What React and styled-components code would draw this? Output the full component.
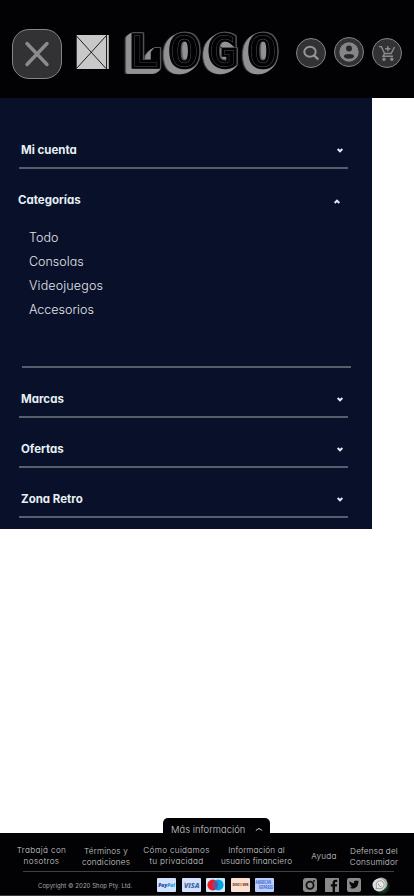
import React from "react";
import styled, { createGlobalStyle, css } from "styled-components";

const Global = createGlobalStyle`
  * { box-sizing: border-box; }
  body { margin: 0; background: #fff; font-family: Inter, "Open Sans", sans-serif; font-feature-settings: "cv11" 1; }
  button { font: inherit; font-feature-settings: inherit; padding: 0; border: 0; background: none; }
`;
const Page = styled.div`
  width: 414px; height: 896px; display: flex; flex-direction: column; overflow: hidden;
`;
const Header = styled.header`
  height: 98px; flex: none; background: #020204; display: flex; align-items: flex-start; padding-left: 12px;
`;
const CloseButton = styled.button`
  width: 50px; height: 50px; margin-top: 29px; border-radius: 17px; background: #323234;
  border: 1px solid #858587; display: flex; align-items: center; justify-content: center;
`;
const Placeholder = styled.svg`
  width: 33px; height: 34px; margin: 35px 0 0 14px; flex: none;
`;

const outline = "drop-shadow(1px 0 0 #565658) drop-shadow(0 -1px 0 #565658)";
const extrusion = Array.from({ length: 5 }, () => "drop-shadow(-1px 1px 0 #929294)").join(" ");

const Wordmark = styled.div`
  display: flex; flex: none; width: 160px; height: 50px; margin: 27px 0 0 15px; line-height: 50px;
  font-family: "DejaVu Sans Mono", monospace; font-size: 41px; color: #020204;
`;
const Letter = styled.span`
  position: relative; width: 39.6px; height: 50px; text-align: center; flex: none;
  transform: translateX(${(p) => p.$shift || 0}px) scaleX(${(p) => p.$stretch});
  -webkit-text-stroke: 5.4px #020204; paint-order: stroke fill;
  filter: ${outline} ${extrusion};
  &::after {
    content: "${(p) => p.children}"; position: absolute; inset: 0;
    -webkit-text-stroke: 0.8px #525254; color: #020204;
  }
  ${(p) => p.$heel && css`
    &::before {
      content: ""; position: absolute; left: 25px; top: 21px; width: 8.4px; height: 19px; background: #020204;
      clip-path: polygon(40% 0, 100% 0, 100% 100%, 0 100%, 0 25%);
    }
  `}
`;
const Actions = styled.div`
  display: flex; gap: 8px; margin: 37px 0 0 12px;
`;
const RoundButton = styled.button`
  width: 30px; height: 30px; border-radius: 50%; background: #323234; border: 1px solid #858587;
  margin-top: ${(p) => p.$drop}px; display: flex; align-items: center; justify-content: center; flex: none;
`;
const Menu = styled.nav`
  width: 372px; height: 431px; background: #09102a; padding: 35px 24px 0 19px; flex: none;
`;
const MenuRow = styled.div`
  height: ${(p) => (p.$first ? 36 : 50)}px; padding: ${(p) => (p.$first ? 8 : 22)}px 5px 0 2px;
  border-bottom: 2px solid #565d6c; display: flex; justify-content: space-between;
`;
const MenuTitle = styled.span`
  font-size: 11.5px; line-height: 19px; font-weight: 700; color: #e6f0f3; white-space: nowrap;
`;
const Chevron = styled.svg`
  width: 6px; height: 5px; margin-top: ${(p) => p.$top}px; fill: none; stroke: #e6edf2; stroke-width: 2;
`;
const OpenSection = styled.section`
  height: 199px; width: 329px; margin-left: 3px; border-bottom: 2px solid #565d6c; padding-top: 22px;
`;
const OpenHead = styled.div`
  display: flex; justify-content: space-between; height: 19px; margin-left: -4px; padding-right: 11px;
`;
const SubList = styled.ul`
  list-style: none; margin: 16px 0 0 7px; padding: 0; color: #e3e4e8; font-weight: 300; font-size: 12.5px; line-height: 24px;
`;
const SubItem = styled.li`
  letter-spacing: ${(p) => p.$track || 0}px;
`;
const Footer = styled.footer`
  margin-top: auto; height: 78px; flex: none; display: flex; flex-direction: column;
`;
const MoreTab = styled.button`
  width: 107px; height: 15px; margin-left: 163px; background: #020204; border-radius: 5px 5px 0 0;
  color: #d0d0d0; font-weight: 300; font-size: 9.4px; display: flex; align-items: center; gap: 9px;
  padding: 8px 0 0 8px; white-space: nowrap;
`;
const TabLabel = styled.span`
  line-height: 14px; margin-top: 1px; width: 75px; text-align: left; letter-spacing: 0.05px;
`;
const FooterBar = styled.div`
  height: 63px; background: #020204; border-bottom: 1px solid #3c3839; padding-left: 10px;
`;
const Links = styled.div`
  display: flex; height: 38px; color: #cfcfcf; font-size: 8.2px; line-height: 11px; font-weight: 300; text-align: center; padding-top: 12px;
`;
const FootLink = styled.a`
  width: ${(p) => p.$w}px; padding-top: ${(p) => p.$drop}px; white-space: nowrap; flex: none;
  letter-spacing: ${(p) => p.$track || 0}px;
`;
const Rule = styled.div`
  height: 1px; width: 371px; margin-left: 13px; background: #3e423e;
`;
const Bottom = styled.div`
  display: flex; height: 23px; padding: 6px 0 0 28px;
`;
const Copyright = styled.span`
  width: 119px; font-size: 6px; line-height: 9px; padding-top: 3px; color: #a8a8a8; white-space: nowrap;
  letter-spacing: 0.05px;
`;
const Cards = styled.div`
  display: flex; gap: 5.6px; width: 146px;
`;
const Card = styled.svg`
  width: 19px; height: 14px; flex: none; overflow: visible; font-family: "Open Sans", sans-serif; font-weight: 800;
`;
const Social = styled.div`
  display: flex; gap: 8px;
`;
const SocialIcon = styled.svg`
  width: 14px; height: 14px; flex: none; overflow: visible;
`;

const Down = () => <Chevron $top={7} viewBox="0 0 6 5"><path d="M.6 1 3 3.3 5.4 1" /></Chevron>;

const Row = ({ children, first }) => (
  <MenuRow $first={first}><MenuTitle>{children}</MenuTitle><Down /></MenuRow>
);

export default function App() {
  return (
    <Page>
      <Global />
      <Header>
        <CloseButton aria-label="Cerrar">
          <svg width="28" height="28" viewBox="0 0 28 28" stroke="#8b8b8d" strokeWidth="3.4" strokeLinecap="round"><path d="M4 3.500 24 24.500M24 3.500 4 24.500" /></svg>
        </CloseButton>
        <Placeholder viewBox="0 0 33 34">
          <rect width="30" height="34" fill="#c8c8c8" /><rect x="31" width="1.800" height="34" fill="#c8c8c8" />
          <path d="M.5 1 30 33.500M30 1 .5 33.500M30.500 0V34M.3 0V34" stroke="#202022" fill="none" />
        </Placeholder>
        <Wordmark aria-label="LOGO">
          <Letter $stretch={1.18} $shift={0.5} $heel>L</Letter>
          <Letter $stretch={1.18} $shift={0.5}>O</Letter>
          <Letter $stretch={1.1}>G</Letter>
          <Letter $stretch={1.14}>O</Letter>
        </Wordmark>
        <Actions>
          <RoundButton $drop={1} aria-label="Buscar">
            <svg width="18" height="18" viewBox="0 0 18 18" fill="none" stroke="#959597" strokeWidth="2"><ellipse cx="8" cy="7.700" rx="5.700" ry="5" /><path d="m12 11.300 4.300 4.200" strokeWidth="2.400" /></svg>
          </RoundButton>
          <RoundButton $drop={0} aria-label="Mi cuenta">
            <svg width="20" height="20" viewBox="0 0 20 20"><circle cx="10" cy="10" r="9.700" fill="#858587" /><circle cx="10" cy="6.500" r="3" fill="#29292b" /><ellipse cx="10" cy="14.300" rx="5" ry="2.400" fill="#29292b" /></svg>
          </RoundButton>
          <RoundButton $drop={1} aria-label="Carrito">
            <svg width="18" height="18" viewBox="0 0 18 18" fill="none" stroke="#8b8b8d" strokeWidth="1.400"><path d="M1 2.600h2.400l3.200 6.900h6.600L16.500 3M6.600 9.500 5 12.300h10M9.800 2v5.200M7.100 4.700h5.300" /><circle cx="6" cy="15.300" r="1" fill="#8b8b8d" /><circle cx="13.800" cy="15.300" r="1" fill="#8b8b8d" /></svg>
          </RoundButton>
        </Actions>
      </Header>
      <Menu>
        <Row first>Mi cuenta</Row>
        <OpenSection>
          <OpenHead><MenuTitle>Categorías</MenuTitle><Chevron $top={8} viewBox="0 0 6 5"><path d="M.6 4 3 1.700 5.400 4" /></Chevron></OpenHead>
          <SubList><SubItem>Todo</SubItem><SubItem>Consolas</SubItem><SubItem $track={0.15}>Videojuegos</SubItem><SubItem>Accesorios</SubItem></SubList>
        </OpenSection>
        <Row>Marcas</Row>
        <Row>Ofertas</Row>
        <Row>Zona Retro</Row>
      </Menu>
      <Footer>
        <MoreTab><TabLabel>Más información</TabLabel>
          <svg width="8" height="5" viewBox="0 0 8 5" fill="none" stroke="#ccc"><path d="M.8 3.500 4 1.400 7.200 3.500" /></svg>
        </MoreTab>
        <FooterBar>
          <Links>
            <FootLink $w={63} $drop={0} $track={0.35}>Trabajá con<br />nosotros</FootLink>
            <FootLink $w={66} $drop={1} $track={0.18}>Términos y<br />condiciones</FootLink>
            <FootLink $w={75} $drop={0} $track={0.3}>Cómo cuidamos<br />tu privacidad</FootLink>
            <FootLink $w={85} $drop={0} $track={0.12}>Información al<br />usuario financiero</FootLink>
            <FootLink $w={50} $drop={6} $track={0.3}>Ayuda</FootLink>
            <FootLink $w={50} $drop={1} $track={0.18}>Defensa del<br />Consumidor</FootLink>
          </Links>
          <Rule />
          <Bottom>
            <Copyright>Copyright © 2020 Shop Pty. Ltd.</Copyright>
            <Cards>
              <Card viewBox="0 0 19 14"><rect width="19" height="14" rx="1" fill="#d2e2ff" /><text x="1.2" y="9" fontSize="5.5" fontStyle="italic" textLength="16.8" lengthAdjust="spacingAndGlyphs"><tspan fill="#1d4d98">Pay</tspan><tspan fill="#239ee0">Pal</tspan></text></Card>
              <Card viewBox="0 0 19 14"><rect width="19" height="14" rx="1" fill="#d2e2ff" /><text x="2" y="9.8" fontSize="7.4" fontStyle="italic" fill="#4266a7" textLength="15.5" lengthAdjust="spacingAndGlyphs">VISA</text><path d="m2 4.400 2 .2.700 2.500z" fill="#dba753" /></Card>
              <Card viewBox="0 0 19 14"><rect width="19" height="14" rx="1" fill="#c9eafb" /><circle cx="6.8" cy="7" r="5.4" fill="#ee1824" /><circle cx="12.2" cy="7" r="5.4" fill="#08a2df" /><path d="M9.5 2.400a5.400 5.400 0 0 1 0 9.200 5.400 5.400 0 0 1 0-9.200" fill="#5e55a3" /></Card>
              <Card viewBox="0 0 19 14"><rect width="19" height="14" rx="1" fill="#ffe0d0" /><text x="1.5" y="8.3" fontSize="3.6" fill="#514744" textLength="16" lengthAdjust="spacingAndGlyphs">DISC<tspan fill="#f1702a">O</tspan>VER</text></Card>
              <Card viewBox="0 0 19 14"><rect width="19" height="14" rx="1" fill="#bccfff" /><text x=".6" y="6.2" fontSize="4.4" fill="#5378d5" textLength="15.500" lengthAdjust="spacingAndGlyphs">AMERICAN</text><text x="4" y="10.7" fontSize="4.4" fill="#5378d5" textLength="14" lengthAdjust="spacingAndGlyphs">EXPRESS</text></Card>
            </Cards>
            <Social>
              <SocialIcon viewBox="0 0 14 14"><rect width="14" height="14" rx="3" fill="#8a8a8a" /><circle cx="7" cy="7.3" r="3.6" fill="none" stroke="#111" strokeWidth="1.8" /><circle cx="11" cy="3" r="1" fill="#111" /></SocialIcon>
              <SocialIcon viewBox="0 0 14 14"><rect width="14" height="14" rx=".7" fill="#8a8a8a" /><path d="M7.600 14V8.500H5.800V6.200h1.800V4.700c0-2 1.100-3 3-3h1.700v2.200h-1.100c-.9 0-1.200.4-1.200 1.200v1.100h2.200L11.900 8.500H10V14z" fill="#080808" /></SocialIcon>
              <SocialIcon viewBox="0 0 14 14"><rect width="14" height="14" rx="2" fill="#8a8a8a" /><path d="M2.500 3c1.200 1.400 2.700 2.100 4.400 2.200-.4-2 1.800-3.400 3.300-2.100l1.500-.5-.7 1.300 1.200-.3-1.100 1.300c.1 4.100-4.300 7-8.800 4.800 1.200 0 2.200-.3 3-.9-1-.1-1.700-.7-2-1.600h.9C3 6.700 2.500 5.900 2.400 4.900l.9.300C2.400 4.500 2.100 3.800 2.500 3" fill="#080808" /></SocialIcon>
              <SocialIcon viewBox="-4 0 14 14">
                <defs><radialGradient id="glow"><stop stopColor="#388a44" /><stop offset="1" stopColor="#388a44" stopOpacity="0" /></radialGradient></defs>
                <circle cx="9" cy="8.500" r="8.500" fill="url(#glow)" /><circle cx="8.300" cy="5.600" r="6.200" fill="#a9aba9" /><circle cx="6" cy="7" r="6.500" fill="#dedede" />
                <path d="m3 11 .6-2.300a4 4 0 1 1 1.600 1.600z" fill="#e8e8e8" stroke="#929292" strokeWidth=".9" /><path d="M5.500 5.500c0 2 1.200 3 3 3.200" fill="none" stroke="#929292" strokeWidth="1" />
              </SocialIcon>
            </Social>
          </Bottom>
        </FooterBar>
      </Footer>
    </Page>
  );
}
